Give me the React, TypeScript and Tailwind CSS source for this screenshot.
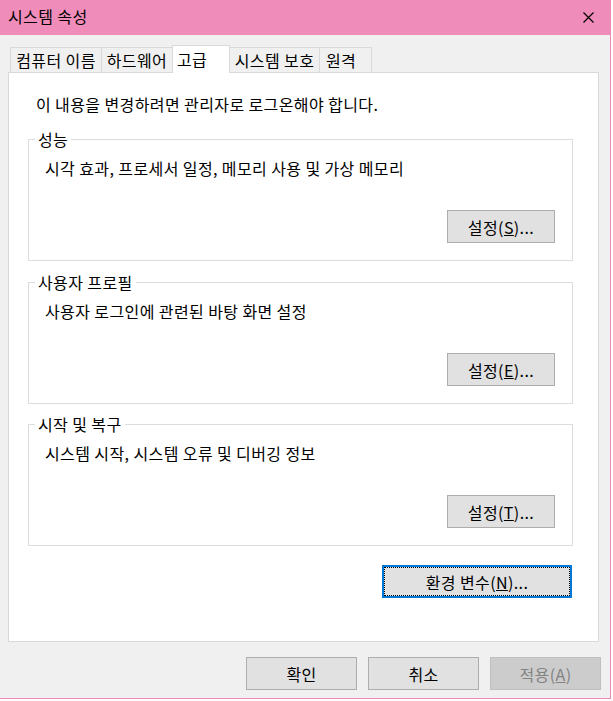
import React from "react";

type ButtonProps = {
  children: React.ReactNode;
  className?: string;
  disabled?: boolean;
};

const WinButton: React.FC<ButtonProps> = ({ children, className = "", disabled }) => {
  const look = disabled
    ? "border-[#bfbfbf] bg-[#cccccc] text-[#838383]"
    : "border-[#adadad] bg-[#e1e1e1] text-black";
  return (
    <button
      type="button"
      className={`flex h-[33px] items-center justify-center border text-[16px] leading-[20px] tracking-[0.4px] ${look} ${className}`}
    >
      {children}
    </button>
  );
};

type GroupProps = {
  title: string;
  text: string;
  hotkey: string;
};

const Group: React.FC<GroupProps> = ({ title, text, hotkey }) => (
  <fieldset className="border border-[#dcdcdc] pb-[17px] pl-[16px] pr-[17px]">
    <legend className="-ml-[10px] px-[3px] leading-[20px]">{title}</legend>
    <p className="pt-[9px] leading-[20px]">{text}</p>
    <div className="mt-[32px] flex justify-end">
      <WinButton className="w-[108px]">
        설정(<span className="underline">{hotkey}</span>)...
      </WinButton>
    </div>
  </fieldset>
);

export default function App() {
  return (
    <div className="h-[701px] w-[613px] bg-white font-['Noto_Sans_CJK_KR',sans-serif] text-[16px] tracking-[0.4px] text-black">
      <div className="flex h-[699px] w-[611px] flex-col border-b border-r border-[#ee8ab8] bg-[#f0f0f0]">
        {/* title bar */}
        <div className="flex h-[35px] shrink-0 items-center justify-between bg-[#ef8cb9] pb-[3px] pl-[8px] pr-[16px]">
          <span className="leading-[20px]">시스템 속성</span>
          <svg width="11" height="11" viewBox="0 0 11 11" className="mt-[2px]">
            <path d="M0.5 0.5 L10.5 10.5 M10.5 0.5 L0.5 10.5" stroke="#000" strokeWidth="1.2" />
          </svg>
        </div>

        <div className="px-[8px]">
          {/* tabs */}
          <div className="relative z-10 -mb-px mt-[10px] flex h-[28px] items-start pl-[2px]">
            <div className="mt-[2px] flex h-[25px] w-[91px] items-center justify-center border-l border-t border-[#d9d9d9] leading-[20px]">
              컴퓨터 이름
            </div>
            <div className="mt-[2px] flex h-[25px] w-[71px] items-center justify-center border-l border-t border-[#d9d9d9] leading-[20px]">
              하드웨어
            </div>
            <div className="flex h-[28px] w-[58px] items-center border-l border-r border-t border-[#d9d9d9] bg-white pb-[2px] pl-[4px] leading-[20px]">
              고급
            </div>
            <div className="mt-[2px] flex h-[25px] w-[90px] items-center justify-center border-r border-t border-[#d9d9d9] leading-[20px]">
              시스템 보호
            </div>
            <div className="mt-[2px] flex h-[25px] w-[52px] items-center border-r border-t border-[#d9d9d9] pl-[6px] leading-[20px]">
              원격
            </div>
          </div>

          {/* panel */}
          <div className="flex h-[570px] w-[591px] flex-col border border-[#d9d9d9] bg-white pl-[19px] pr-[25px] pt-[21px]">
            <p className="pl-[8px] leading-[20px]">이 내용을 변경하려면 관리자로 로그온해야 합니다.</p>

            <div className="mt-[15px]">
              <Group title="성능" text="시각 효과, 프로세서 일정, 메모리 사용 및 가상 메모리" hotkey="S" />
            </div>
            <div className="mt-[11px]">
              <Group title="사용자 프로필" text="사용자 로그인에 관련된 바탕 화면 설정" hotkey="E" />
            </div>
            <div className="mt-[10px]">
              <Group title="시작 및 복구" text="시스템 시작, 시스템 오류 및 디버깅 정보" hotkey="T" />
            </div>

            <div className="mt-[19px] flex justify-end pr-[1px]">
              <button
                type="button"
                className="h-[33px] w-[190px] border-2 border-[#0078d7] bg-[#e1e1e1] p-0"
              >
                <span className="flex h-full w-full items-center justify-center border border-dotted border-black text-[16px] leading-[20px] tracking-[0.4px]">
                  환경 변수(<span className="underline">N</span>)...
                </span>
              </button>
            </div>
          </div>
        </div>

        {/* dialog buttons */}
        <div className="mt-[15px] flex justify-end gap-[11px] pr-[9px]">
          <WinButton className="w-[111px]">확인</WinButton>
          <WinButton className="w-[111px]">취소</WinButton>
          <WinButton className="w-[111px]" disabled>
            적용(<span className="underline">A</span>)
          </WinButton>
        </div>
      </div>
    </div>
  );
}
